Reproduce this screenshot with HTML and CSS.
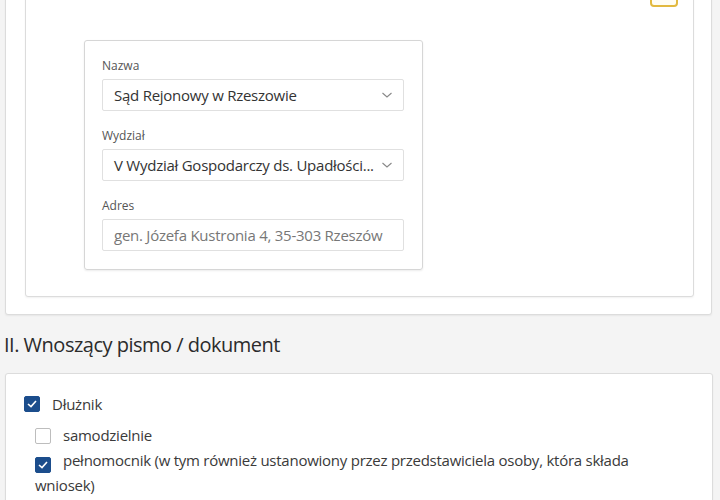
FILE: index.html
```html
<!DOCTYPE html>
<html lang="pl">

<head>
    <meta charset="UTF-8">
    <meta name="viewport" content="width=device-width, initial-scale=1.0">
    <title>Sąd i wnoszący</title>
    <link rel="stylesheet" href="styles.css">
</head>

<body>

    <div class="page">

        <div class="card outer">
            <div class="card inner">
                <div class="inner-head">
                    <span class="head-label">Sąd</span>
                    <button type="button" class="mark-btn"></button>
                </div>

                <div class="court-box">
                    <div class="field">
                        <label>Nazwa</label>
                        <div class="select">
                            <span class="value">Sąd Rejonowy w Rzeszowie</span>
                            <svg class="chevron" width="12" height="8" viewBox="0 0 12 8">
                                <path d="M1.5 2 L6 6 L10.5 2" fill="none" stroke="#888" stroke-width="1.1" />
                            </svg>
                        </div>
                    </div>
                    <div class="field">
                        <label>Wydział</label>
                        <div class="select">
                            <span class="value">V Wydział Gospodarczy ds. Upadłości...</span>
                            <svg class="chevron" width="12" height="8" viewBox="0 0 12 8">
                                <path d="M1.5 2 L6 6 L10.5 2" fill="none" stroke="#888" stroke-width="1.1" />
                            </svg>
                        </div>
                    </div>
                    <div class="field">
                        <label>Adres</label>
                        <div class="select readonly">
                            <span class="value">gen. Józefa Kustronia 4, 35-303 Rzeszów</span>
                        </div>
                    </div>
                </div>
            </div>
        </div>

        <h2 class="section-title">II. Wnoszący pismo / dokument</h2>

        <div class="card applicant">
            <div class="check-row main">
                <span class="box checked"><svg width="10" height="8" viewBox="0 0 10 8"><path d="M1 4 L4 6.6 L9 1" fill="none" stroke="#fff" stroke-width="1.6" /></svg></span>
                <span>Dłużnik</span>
            </div>
            <div class="sub-list">
                <p><span class="box"></span>samodzielnie</p>
                <p><span class="box checked"><svg width="10" height="8" viewBox="0 0 10 8"><path d="M1 4 L4 6.6 L9 1" fill="none" stroke="#fff" stroke-width="1.6" /></svg></span>pełnomocnik (w tym również ustanowiony przez przedstawiciela osoby, która składa wniosek)</p>
            </div>
        </div>

    </div>

</body>

</html>
```

FILE: styles.css
```css
body {
    margin: 0;
    background-color: #f4f4f4;
    font-family: 'Open Sans', sans-serif;
    color: #333;
}

.page {
    padding: 0 8px 0 5px;
    margin-top: -61px; /* page is scrolled */
}

.card {
    background-color: #fff;
    border: 1px solid #dcdcdc;
    border-radius: 3px;
    box-shadow: 0 1px 2px rgba(0, 0, 0, 0.06);
}

.outer {
    padding: 14px 17px 17px 19px;
}

.inner {
    padding: 12px 15px 26px 58px;
}

.inner-head {
    display: flex;
    justify-content: space-between;
    align-items: flex-end;
    height: 40px;
}

.head-label {
    align-self: flex-start;
    font-size: 14px;
}

.mark-btn {
    width: 28px;
    height: 28px;
    padding: 0;
    border: 2px solid #e2b93f;
    border-radius: 4px;
    background-color: #fffdf3;
}

.court-box {
    width: 302px;
    margin-top: 33px;
    padding: 17px 18px 1px 17px;
    border: 1px solid #d6d6d6;
    border-radius: 3px;
    box-shadow: 0 1px 2px rgba(0, 0, 0, 0.08);
}

.field {
    margin-bottom: 17px;
}

.field label {
    display: block;
    font-size: 12px;
    line-height: 16px;
    color: #555;
    margin-bottom: 5px;
}

.select {
    display: flex;
    align-items: center;
    justify-content: space-between;
    height: 30px;
    padding: 0 10px 0 11px;
    border: 1px solid #e0e0e0;
    border-radius: 2px;
    font-size: 15px;
    letter-spacing: -0.25px;
    color: #333;
}

.select .value {
    white-space: nowrap;
}

.select.readonly {
    color: #777;
}

.section-title {
    margin: 16px 0 14px -1px;
    font-size: 20px;
    font-weight: 500;
    letter-spacing: -0.5px;
    line-height: 28px;
    color: #2b2b2b;
}

.applicant {
    margin-right: -1px;
    padding: 20px 18px 10px 18px;
    font-size: 15px;
    letter-spacing: -0.25px;
    color: #3a3a3a;
}

.check-row {
    display: flex;
    align-items: center;
}

.box {
    display: inline-flex;
    align-items: center;
    justify-content: center;
    box-sizing: border-box;
    width: 16px;
    height: 16px;
    border: 1px solid #bdbdbd;
    border-radius: 2px;
    background-color: #fff;
    margin-right: 12px;
    vertical-align: -3px;
}

.box.checked {
    background-color: #1b4d8c;
    border-color: #1b4d8c;
}

.sub-list {
    margin-top: 9px;
    padding: 0 40px 0 11px;
}

.sub-list p {
    margin: 0;
    line-height: 25px;
}
```
